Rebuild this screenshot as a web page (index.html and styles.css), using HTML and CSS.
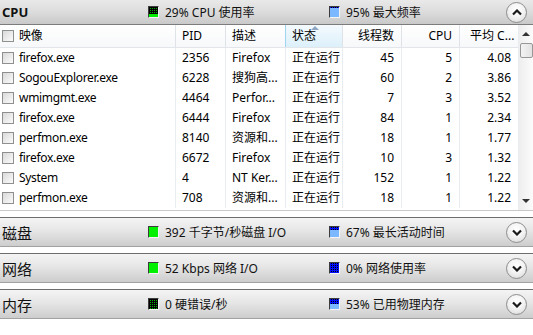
FILE: index.html
```html
<!DOCTYPE html>
<html lang="zh-CN">
<head>
    <meta charset="UTF-8">
    <title>资源监视器</title>
    <link rel="stylesheet" href="styles.css">
</head>
<body>
<div class="monitor">
    <div class="bar bar-cpu">
        <span class="bar-title title-en">CPU</span>
        <span class="stat stat-1"><span class="meter grid-green"><span class="fill green" style="height:29%"></span></span>29% CPU 使用率</span>
        <span class="stat"><span class="meter grid-blue"><span class="fill blue" style="height:95%"></span></span>95% 最大频率</span>
        <span class="toggle"><svg width="10" height="7" viewBox="0 0 10 7"><path d="M1 5.5 L5 1.5 L9 5.5" fill="none" stroke="#1a1a1a" stroke-width="2.2"/></svg></span>
    </div>
    <div class="list">
        <div class="table">
            <div class="row head">
                <div class="c c-name"><span class="check"></span>映像</div>
                <div class="c">PID</div>
                <div class="c">描述</div>
                <div class="c sorted"><span class="sort-arrow"></span>状态</div>
                <div class="c num">线程数</div>
                <div class="c num">CPU</div>
                <div class="c avg">平均 C...</div>
            </div>
            <div class="row">
                <div class="c c-name"><span class="check"></span>firefox.exe</div>
                <div class="c">2356</div>
                <div class="c">Firefox</div>
                <div class="c">正在运行</div>
                <div class="c num">45</div>
                <div class="c num">5</div>
                <div class="c num">4.08</div>
            </div>
            <div class="row">
                <div class="c c-name"><span class="check"></span>SogouExplorer.exe</div>
                <div class="c">6228</div>
                <div class="c">搜狗高...</div>
                <div class="c">正在运行</div>
                <div class="c num">60</div>
                <div class="c num">2</div>
                <div class="c num">3.86</div>
            </div>
            <div class="row">
                <div class="c c-name"><span class="check"></span>wmimgmt.exe</div>
                <div class="c">4464</div>
                <div class="c">Perfor...</div>
                <div class="c">正在运行</div>
                <div class="c num">7</div>
                <div class="c num">3</div>
                <div class="c num">3.52</div>
            </div>
            <div class="row">
                <div class="c c-name"><span class="check"></span>firefox.exe</div>
                <div class="c">6444</div>
                <div class="c">Firefox</div>
                <div class="c">正在运行</div>
                <div class="c num">84</div>
                <div class="c num">1</div>
                <div class="c num">2.34</div>
            </div>
            <div class="row">
                <div class="c c-name"><span class="check"></span>perfmon.exe</div>
                <div class="c">8140</div>
                <div class="c">资源和...</div>
                <div class="c">正在运行</div>
                <div class="c num">18</div>
                <div class="c num">1</div>
                <div class="c num">1.77</div>
            </div>
            <div class="row">
                <div class="c c-name"><span class="check"></span>firefox.exe</div>
                <div class="c">6672</div>
                <div class="c">Firefox</div>
                <div class="c">正在运行</div>
                <div class="c num">10</div>
                <div class="c num">3</div>
                <div class="c num">1.32</div>
            </div>
            <div class="row">
                <div class="c c-name"><span class="check"></span>System</div>
                <div class="c">4</div>
                <div class="c">NT Ker...</div>
                <div class="c">正在运行</div>
                <div class="c num">152</div>
                <div class="c num">1</div>
                <div class="c num">1.22</div>
            </div>
            <div class="row">
                <div class="c c-name"><span class="check"></span>perfmon.exe</div>
                <div class="c">708</div>
                <div class="c">资源和...</div>
                <div class="c">正在运行</div>
                <div class="c num">18</div>
                <div class="c num">1</div>
                <div class="c num">1.22</div>
            </div>
        </div>
        <div class="scrollbar">
            <span class="arrow arrow-up"></span>
            <span class="thumb"></span>
            <span class="track"></span>
            <span class="arrow arrow-down"></span>
        </div>
    </div>

    <div class="bar bar-sub">
        <span class="bar-title">磁盘</span>
        <span class="stat stat-1"><span class="meter green"></span>392 千字节/秒磁盘 I/O</span>
        <span class="stat"><span class="meter grid-blue"><span class="fill blue" style="height:67%"></span></span>67% 最长活动时间</span>
        <span class="toggle"><svg width="10" height="7" viewBox="0 0 10 7"><path d="M1 1.5 L5 5.5 L9 1.5" fill="none" stroke="#1a1a1a" stroke-width="2.2"/></svg></span>
    </div>
    <div class="bar bar-sub">
        <span class="bar-title">网络</span>
        <span class="stat stat-1"><span class="meter green"></span>52 Kbps 网络 I/O</span>
        <span class="stat"><span class="meter grid-blue"></span>0% 网络使用率</span>
        <span class="toggle"><svg width="10" height="7" viewBox="0 0 10 7"><path d="M1 1.5 L5 5.5 L9 1.5" fill="none" stroke="#1a1a1a" stroke-width="2.2"/></svg></span>
    </div>
    <div class="bar bar-sub">
        <span class="bar-title">内存</span>
        <span class="stat stat-1"><span class="meter grid-green"></span>0 硬错误/秒</span>
        <span class="stat"><span class="meter grid-blue"><span class="fill blue" style="height:53%"></span></span>53% 已用物理内存</span>
        <span class="toggle"><svg width="10" height="7" viewBox="0 0 10 7"><path d="M1 1.5 L5 5.5 L9 1.5" fill="none" stroke="#1a1a1a" stroke-width="2.2"/></svg></span>
    </div>
</div>
</body>
</html>
```

FILE: styles.css
```css
body {
    margin: 0;
    background: #fff;
    font-family: "Noto Sans", "Noto Sans CJK SC", sans-serif;
    font-size: 12px;
    color: #000;
}

.monitor {
    width: 533px;
}

/* section header bars */
.bar {
    display: flex;
    align-items: center;
    background: linear-gradient(#f4f4f4 0%, #e6e6e6 45%, #cdcdcd 100%);
}
.bar-cpu {
    height: 24px;
    border-bottom: 1px solid #7c7c7c;
    background: linear-gradient(#e9e9e9 0%, #dcdcdc 50%, #c9c9c9 100%);
}
.bar-sub {
    height: 28px;
    margin-top: 6px;
    border-top: 1px solid #6e6e6e;
    border-bottom: 1px solid #a2a2a2;
}
.bar-title {
    width: 146px;
    padding-left: 2px;
    font-family: "Noto Sans CJK SC", sans-serif;
    font-size: 15px;
    color: #111;
}
.title-en {
    font-family: "Noto Sans", sans-serif;
    font-size: 13px;
    font-weight: bold;
}
.stat {
    display: flex;
    align-items: center;
    flex: 1;
    color: #111;
}
.stat-1 {
    flex: none;
    width: 181px;
}

.meter {
    position: relative;
    width: 9px;
    height: 10px;
    margin-right: 6px;
    border: 1px solid;
    border-color: #3c3c3c #f4f4f4 #f4f4f4 #3c3c3c;
    overflow: hidden;
}
.fill {
    position: absolute;
    left: 0;
    right: 0;
    bottom: 0;
}
.green {
    background: #00f000;
}
.blue {
    background: #7cb8ff;
}
.grid-green {
    background-color: #00b000;
    background-image: linear-gradient(90deg, #000 1px, transparent 1px), linear-gradient(#000 1px, transparent 1px);
    background-size: 2px 2px;
}
.grid-blue {
    background-color: #0010ff;
    background-image: conic-gradient(#000 0 25%, transparent 0);
    background-size: 2px 2px;
}

.toggle {
    display: flex;
    align-items: center;
    justify-content: center;
    width: 19px;
    height: 19px;
    margin-right: 6px;
    border: 1px solid #8d8d8d;
    border-radius: 50%;
    background: radial-gradient(circle at 50% 35%, #ffffff 0%, #f4f4f4 45%, #d6d6d6 100%);
}

/* process list */
.list {
    display: flex;
    height: 185px;
    border-bottom: 1px solid #c9c9c9;
}
.table {
    width: 518px;
}
.row {
    display: grid;
    grid-template-columns: 176px 50px 60px 57px 59px 58px 58px;
    height: 20px;
    line-height: 20px;
}
.row.head {
    height: 22px;
    line-height: 22px;
    border-bottom: 1px solid #e2e5ea;
    background: linear-gradient(#ffffff, #f7f8fa);
}
.c {
    position: relative;
    padding: 0 6px;
    border-right: 1px solid #e9edf2;
    white-space: nowrap;
    overflow: hidden;
}
.c:last-child {
    border-right: none;
}
.head .c {
    border-right-color: #dfe3e8;
}
.c-name {
    display: flex;
    align-items: center;
    padding-left: 2px;
    letter-spacing: -0.3px;
}
.num {
    text-align: right;
    padding-right: 7px;
}
.avg {
    padding-left: 10px;
}
.sorted {
    background: linear-gradient(#f4fafe, #dcf0fa);
    border-left: 1px solid #9fd5f0;
    border-right-color: #9fd5f0;
    margin-left: -1px;
}
.sort-arrow {
    position: absolute;
    top: 1px;
    left: 25px;
    border-left: 4px solid transparent;
    border-right: 4px solid transparent;
    border-bottom: 4px solid #8fa6c0;
}

.check {
    width: 10px;
    height: 10px;
    margin-right: 5px;
    border: 1px solid #8e8f8f;
    background: linear-gradient(135deg, #d9d9d9, #fbfbfb);
}

.scrollbar {
    display: flex;
    flex-direction: column;
    align-items: center;
    width: 14px;
    border-left: 1px solid #e9edf2;
    background: linear-gradient(90deg, #eeeeee, #fbfbfb);
}
.arrow {
    margin: 7px 0;
    border-left: 4px solid transparent;
    border-right: 4px solid transparent;
}
.arrow-up {
    border-bottom: 4px solid #333;
}
.arrow-down {
    border-top: 4px solid #333;
}
.thumb {
    width: 11px;
    height: 13px;
    border: 1px solid #979797;
    border-radius: 2px;
    background: linear-gradient(90deg, #f3f3f3, #e2e2e2);
}
.track {
    flex: 1;
}
```
